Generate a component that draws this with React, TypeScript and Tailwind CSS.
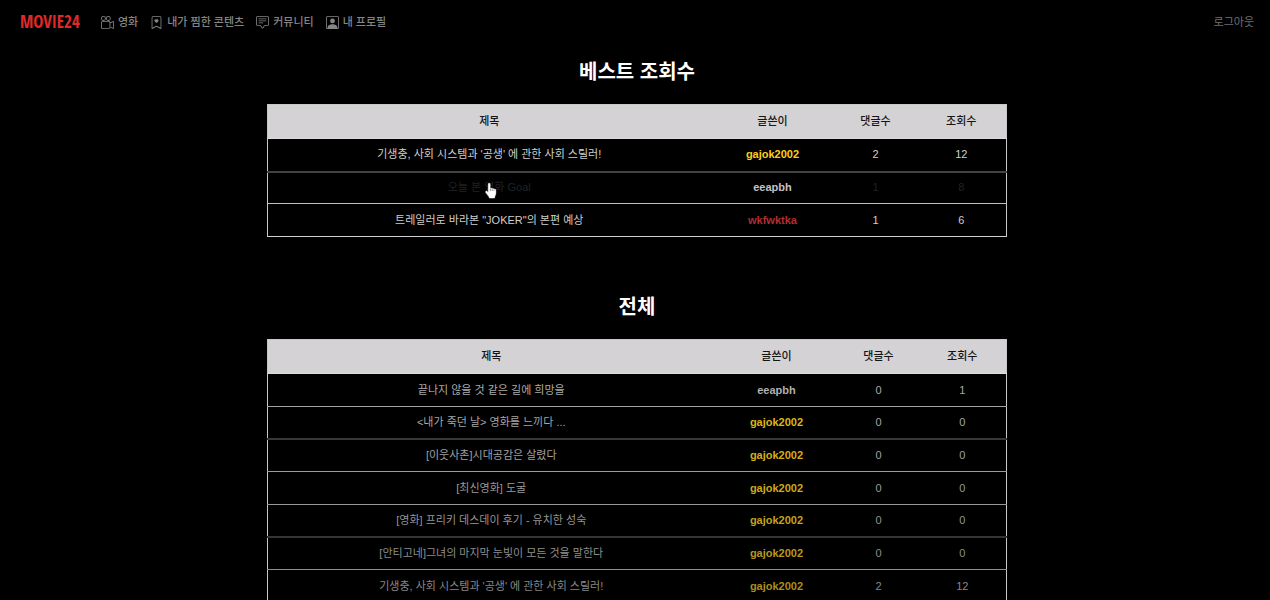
import { BsBookmarkHeart, BsCameraReels, BsChatSquareText, BsPersonSquare } from "react-icons/bs";
import type { IconType } from "react-icons";

type Post = {
  title: string;
  author: string;
  comments: number;
  views: number;
  text: string;
  authorColor: string;
  line: string;
  hovered?: boolean;
};

const navItems: { label: string; icon: IconType }[] = [
  { label: "영화", icon: BsCameraReels },
  { label: "내가 찜한 콘텐츠", icon: BsBookmarkHeart },
  { label: "커뮤니티", icon: BsChatSquareText },
  { label: "내 프로필", icon: BsPersonSquare },
];

const bestPosts: Post[] = [
  { title: "기생충, 사회 시스템과 '공생' 에 관한 사회 스릴러!", author: "gajok2002", comments: 2, views: 12, text: "text-[#cfcfcf]", authorColor: "text-[#fcd116]", line: "border-b-2 border-[#434343]" },
  { title: "오늘 본 영화 Goal", author: "eeapbh", comments: 1, views: 8, text: "text-[#212226]", authorColor: "text-[#c4c2c6]", line: "border-b border-[#c0c0c0]", hovered: true },
  { title: "트레일러로 바라본 \"JOKER\"의 본편 예상", author: "wkfwktka", comments: 1, views: 6, text: "text-[#cfcfcf]", authorColor: "text-[#b32d30]", line: "border-b border-[#d0d0d0]" },
];

const allPosts: Post[] = [
  { title: "끝나지 않을 것 같은 길에 희망을", author: "eeapbh", comments: 0, views: 1, text: "text-[#ababab]", authorColor: "text-[#b0b0b0]", line: "border-b border-[#a3a3a3]" },
  { title: "<내가 죽던 날> 영화를 느끼다 ...", author: "gajok2002", comments: 0, views: 0, text: "text-[#a6a6a6]", authorColor: "text-[#dcb616]", line: "border-b-2 border-[#383838]" },
  { title: "[이웃사촌]시대공감은 살렸다", author: "gajok2002", comments: 0, views: 0, text: "text-[#a0a0a0]", authorColor: "text-[#d4af18]", line: "border-b border-[#9c9c9c]" },
  { title: "[최신영화] 도굴", author: "gajok2002", comments: 0, views: 0, text: "text-[#9a9a9a]", authorColor: "text-[#ccaa18]", line: "border-b border-[#989898]" },
  { title: "[영화] 프리키 데스데이 후기 - 유치한 성숙", author: "gajok2002", comments: 0, views: 0, text: "text-[#959595]", authorColor: "text-[#c4a21a]", line: "border-b-2 border-[#343434]" },
  { title: "[안티고네]그녀의 마지막 눈빛이 모든 것을 말한다", author: "gajok2002", comments: 0, views: 0, text: "text-[#8e8e8e]", authorColor: "text-[#b8981a]", line: "border-b border-[#909090]" },
  { title: "기생충, 사회 시스템과 '공생' 에 관한 사회 스릴러!", author: "gajok2002", comments: 2, views: 12, text: "text-[#888888]", authorColor: "text-[#ac8e1a]", line: "border-b border-[#8c8c8c]" },
];

function HandPointer() {
  return (
    <svg className="absolute top-1 left-1/2 h-4 w-3 -translate-x-1" viewBox="0 0 12 16" aria-hidden="true">
      <path
        d="M3.2 1.200c0-1.300 2-1.300 2 0v4.200c.3-.5 1.700-.5 1.900.3.5-.5 1.700-.3 1.900.5.8-.4 1.900 0 1.900 1v3.400c0 1.600-1.200 2.200-1.200 3.600v.9H4.200v-.9C3.600 12.900 1.700 11.300.7 9.500c-.7-1.200.7-1.900 1.500-1.100l1 1z"
        fill="#fff"
        stroke="#fff"
        strokeWidth=".4"
      />
      <path d="M5.400 5.500v2.500M7.200 6v2M9 6.500v1.500" stroke="#333" strokeWidth=".5" />
    </svg>
  );
}

function PostTable({ id, heading, posts, cols }: { id: string; heading: string; posts: Post[]; cols: string[] }) {
  return (
    <section aria-labelledby={id}>
      <h2 id={id} className="text-center text-[20px] leading-8 font-bold text-white">
        {heading}
      </h2>
      <table className="mt-4 w-full table-fixed border-collapse border border-[#c8c8c8] text-center text-[11px] leading-4">
        <colgroup>
          <col />
          {cols.map((c, i) => (
            <col key={i} className={c} />
          ))}
        </colgroup>
        <thead>
          <tr className="h-[34px] border-b border-[#dcdcdc] bg-[#d4d2d5] text-[#151515]">
            <th className="pb-0.5 font-medium">제목</th>
            <th className="pb-0.5 font-medium">글쓴이</th>
            <th className="pb-0.5 font-medium">댓글수</th>
            <th className="pb-0.5 font-medium">조회수</th>
          </tr>
        </thead>
        <tbody>
          {posts.map((p, i) => (
            <tr key={i} className={`h-[33px] nth-[3n+2]:h-8 ${p.text} ${p.line}`}>
              <td className="pb-px">
                <a href="#post" className="relative inline-block">
                  {p.title}
                  {p.hovered && <HandPointer />}
                </a>
              </td>
              <td className={`pb-px font-['Liberation_Sans',sans-serif] font-bold ${p.authorColor}`}>{p.author}</td>
              <td className="pb-px">{p.comments}</td>
              <td className="pb-px">{p.views}</td>
            </tr>
          ))}
        </tbody>
      </table>
    </section>
  );
}

export default function App() {
  return (
    <div className="min-h-screen bg-black font-['Liberation_Sans','Noto_Sans_CJK_KR',sans-serif]">
      <header className="flex h-11 items-center justify-between px-4 text-[11px] text-[#858585]">
        <div className="flex items-center">
          <a href="#home" className="w-[85px] pl-1 font-['Open_Sans_Condensed','Roboto_Condensed','Noto_Sans_Condensed','Noto_Sans_CJK_KR',sans-serif] text-[17px] leading-5 font-black text-[#e02a2a]">
            MOVIE24
          </a>
          <nav className="flex items-center gap-3">
            {navItems.map(({ label, icon: Icon }) => (
              <a key={label} href="#menu" className="flex items-center gap-1 font-medium">
                <Icon className="size-[13px]" aria-hidden="true" />
                {label}
              </a>
            ))}
          </nav>
        </div>
        <a href="#logout" className="text-[#707070]">로그아웃</a>
      </header>
      <main className="pt-3 pl-1">
        <div className="mx-auto flex max-w-[740px] flex-col gap-[54px]">
          <PostTable id="best" heading="베스트 조회수" posts={bestPosts} cols={["w-[124px]", "w-[82px]", "w-[90px]"]} />
          <PostTable id="all" heading="전체" posts={allPosts} cols={["w-[124px]", "w-[80px]", "w-[88px]"]} />
        </div>
      </main>
    </div>
  );
}
